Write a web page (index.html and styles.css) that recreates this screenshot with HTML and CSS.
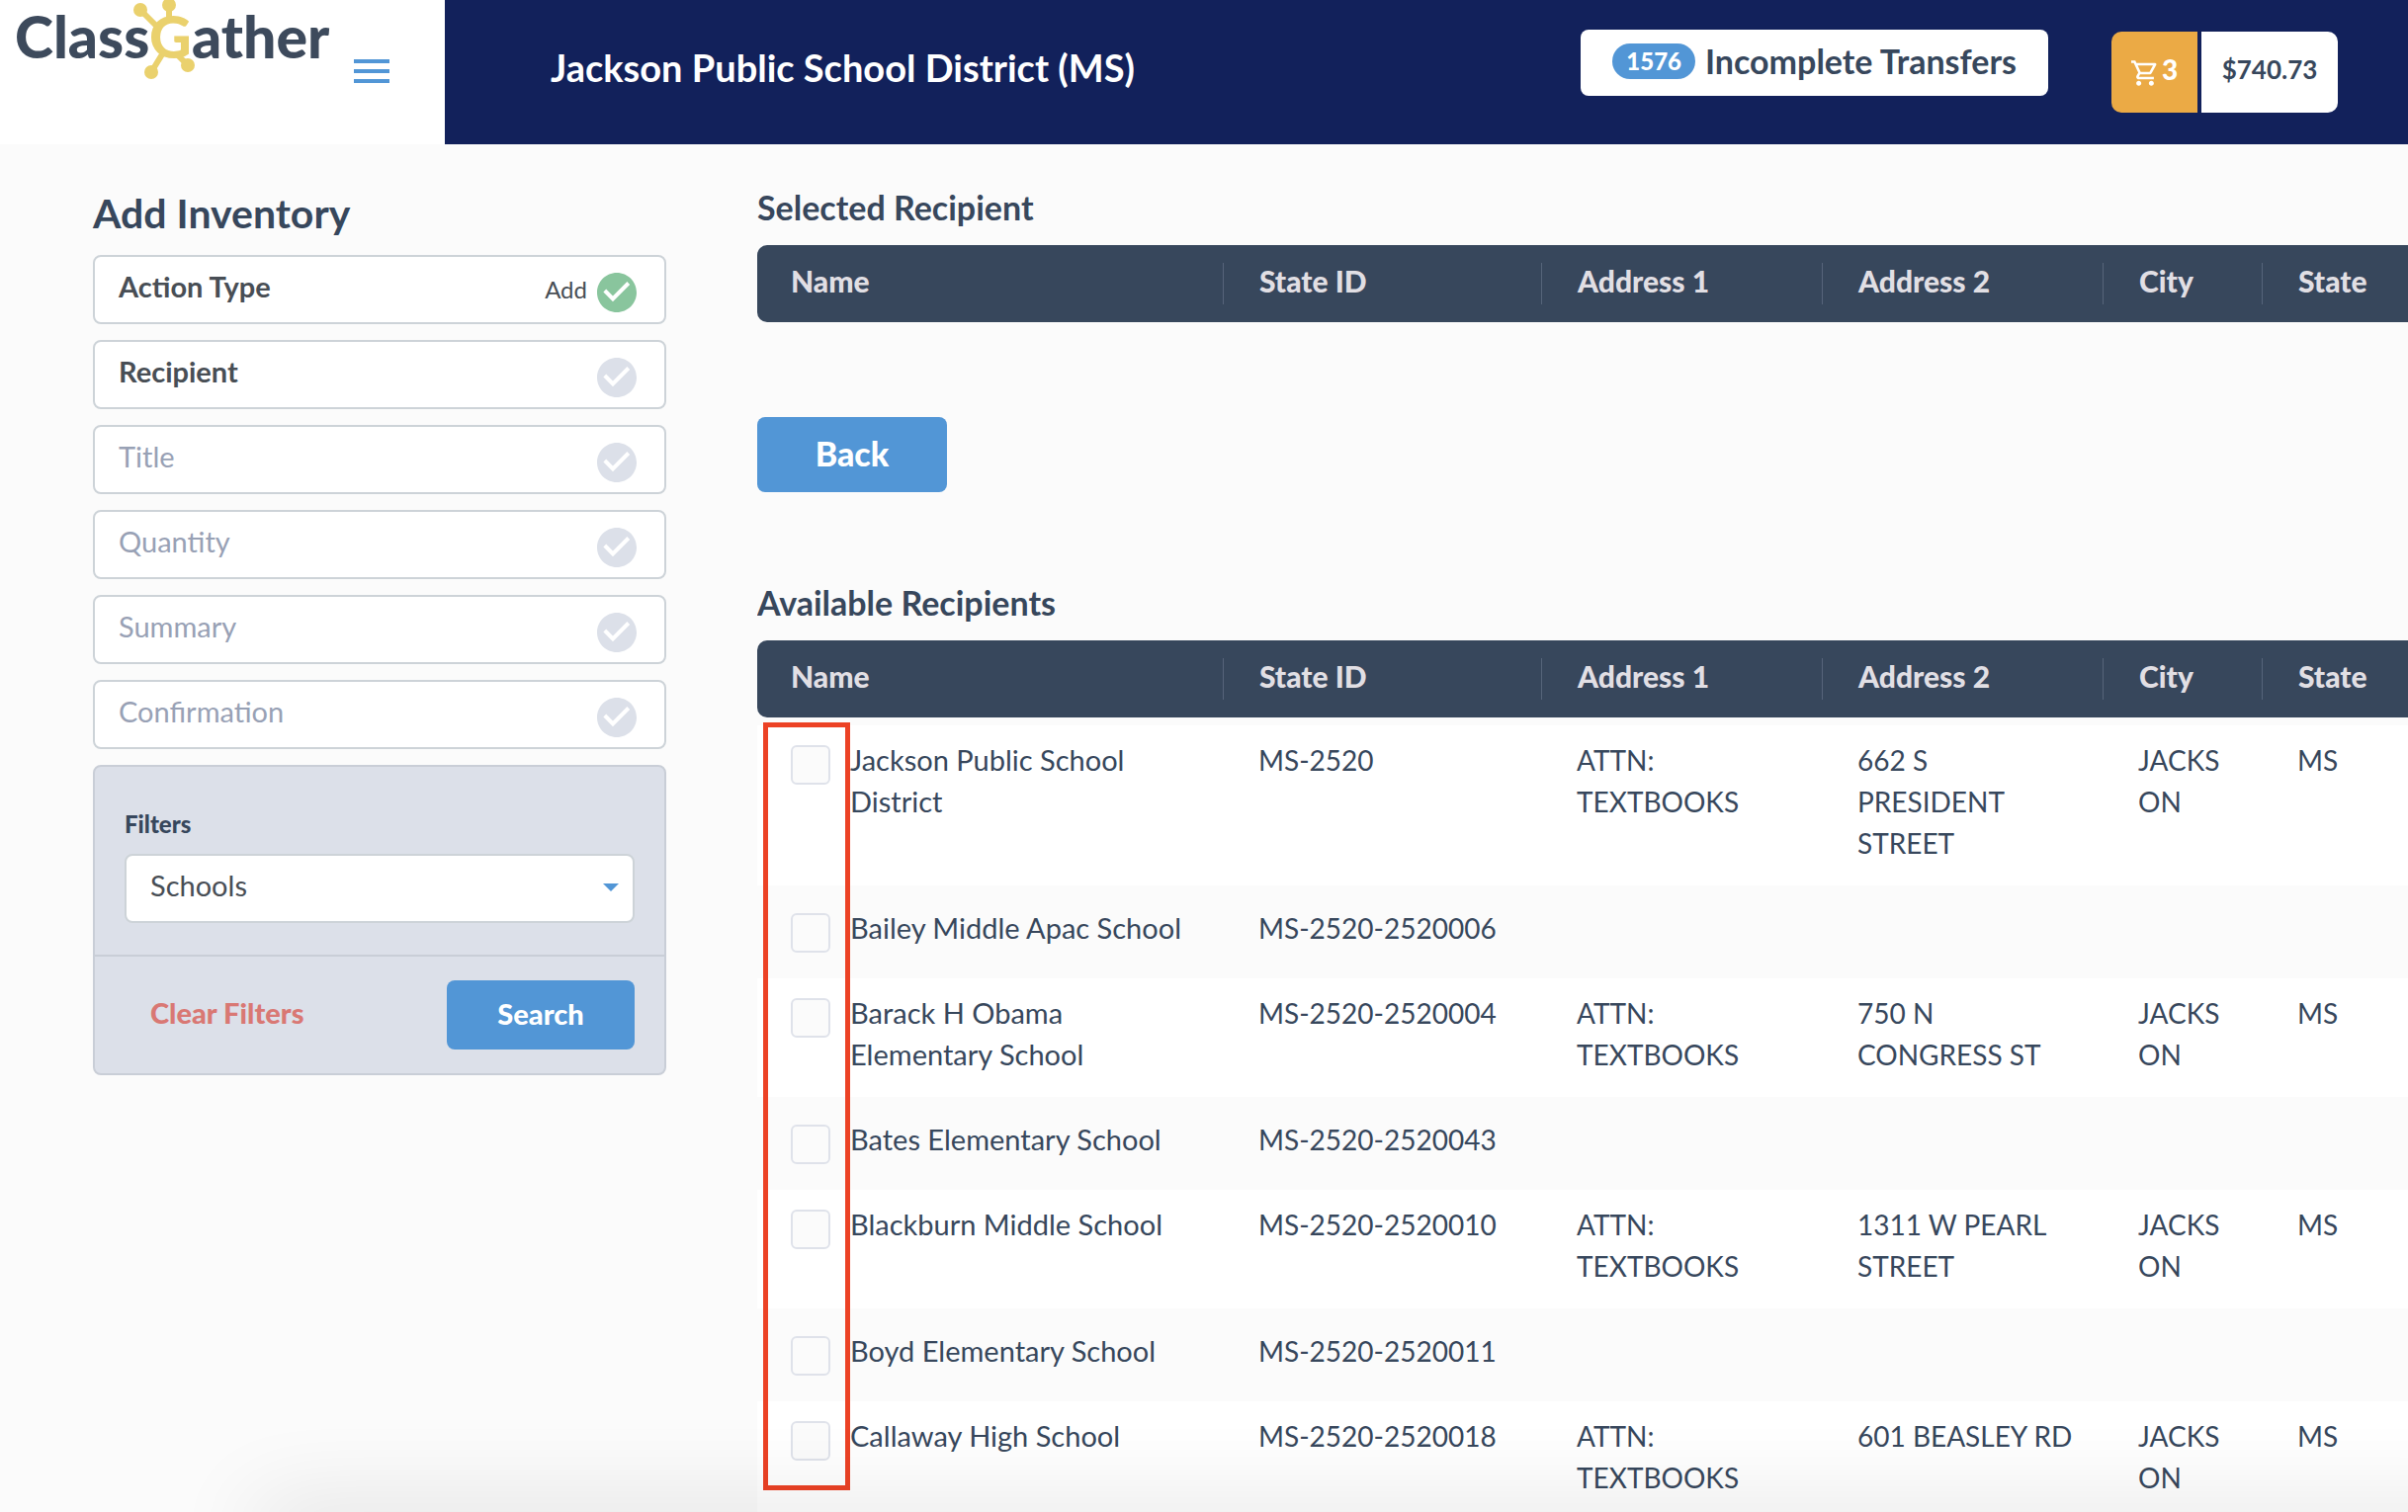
FILE: index.html
```html
<!DOCTYPE html>
<html lang="en">
  <head>
    <meta charset="utf-8">
    <title>ClassGather - Add Inventory</title>
    <link rel="stylesheet" href="styles.css">
  </head>
  <body>
    <!-- Shared check mark icon -->
    <svg class="defs" width="0" height="0" aria-hidden="true">
      <symbol id="check" viewBox="2 2 20 20">
        <path d="M12 2C6.48 2 2 6.48 2 12s4.48 10 10 10 10-4.48 10-10S17.52 2 12 2zm-2 14.6l-4.8-4.8 1.4-1.5L10 13.7l7.2-7.2L18.6 8 10 16.6z"/>
      </symbol>
    </svg>

    <header class="topbar">
      <div class="brand">
        <a href="#" class="logo" aria-label="ClassGather">
          <svg width="340" height="82" viewBox="0 0 340 82">
            <g class="logo-nodes">
              <path d="M142 10l18 18M171 5v16M153 73l11-18M190 66l-10-10"/>
              <circle cx="142" cy="10" r="7"/>
              <circle cx="171" cy="5" r="7"/>
              <circle cx="153" cy="73" r="7"/>
              <circle cx="190" cy="66" r="7"/>
            </g>
            <text class="logo-text" x="15" y="59">Class</text>
            <text class="logo-text logo-g" x="151" y="59">G</text>
            <text class="logo-text" x="194" y="59">ather</text>
          </svg>
        </a>
        <button type="button" class="menu-button" aria-label="Menu">
          <span></span>
          <span></span>
          <span></span>
        </button>
      </div>
      <h1 class="district">Jackson Public School District (MS)</h1>
      <button type="button" class="transfers"><span class="badge">1576</span>Incomplete Transfers</button>
      <div class="cart">
        <button type="button" class="cart-count">
          <svg width="28" height="28" viewBox="1 2 22 20" aria-hidden="true">
            <path d="M15.55 13c.75 0 1.41-.41 1.75-1.03l3.58-6.49A.996.996 0 0 0 20.01 4H5.21l-.94-2H1v2h2l3.6 7.59-1.35 2.44C4.52 15.37 5.48 17 7 17h12v-2H7l1.1-2h7.45zM6.16 6h12.15l-2.76 5H8.53L6.16 6zM7 18c-1.1 0-1.99.9-1.99 2S5.9 22 7 22s2-.9 2-2-.9-2-2-2zm10 0c-1.1 0-1.99.9-1.99 2s.89 2 1.99 2 2-.9 2-2-.9-2-2-2z"/>
          </svg>3
        </button>
        <span class="cart-total">$740.73</span>
      </div>
    </header>

    <div class="page">
      <aside class="sidebar">
        <h2>Add Inventory</h2>
        <ol class="steps">
          <li class="step done">Action Type <span class="step-value">Add</span><svg><use href="#check"/></svg></li>
          <li class="step current">Recipient <svg><use href="#check"/></svg></li>
          <li class="step">Title <svg><use href="#check"/></svg></li>
          <li class="step">Quantity <svg><use href="#check"/></svg></li>
          <li class="step">Summary <svg><use href="#check"/></svg></li>
          <li class="step">Confirmation <svg><use href="#check"/></svg></li>
        </ol>

        <form class="filters">
          <div class="filter-body">
            <label for="filter">Filters</label>
            <div class="select-wrap">
              <select id="filter" name="filter">
                <option>Schools</option>
              </select>
            </div>
          </div>
          <div class="filter-actions">
            <button type="reset" class="clear">Clear Filters</button>
            <button type="button" class="search">Search</button>
          </div>
        </form>
      </aside>

      <main class="content">
        <h3>Selected Recipient</h3>
        <table class="recipients">
          <colgroup>
            <col class="col-name"><col class="col-id"><col class="col-address"><col class="col-address"><col class="col-city"><col class="col-state">
          </colgroup>
          <thead>
            <tr><th>Name</th><th>State ID</th><th>Address 1</th><th>Address 2</th><th>City</th><th>State</th></tr>
          </thead>
        </table>

        <button type="button" class="back">Back</button>

        <h3>Available Recipients</h3>
        <div class="available">
          <table class="recipients">
            <colgroup>
              <col class="col-name"><col class="col-id"><col class="col-address"><col class="col-address"><col class="col-city"><col class="col-state">
            </colgroup>
            <thead>
              <tr><th>Name</th><th>State ID</th><th>Address 1</th><th>Address 2</th><th>City</th><th>State</th></tr>
            </thead>
            <tbody>
              <tr>
                <td><div class="pick"><input type="checkbox" id="r1"><label for="r1">Jackson Public School District</label></div></td>
                <td>MS-2520</td><td>ATTN: TEXTBOOKS</td><td>662 S PRESIDENT STREET</td><td>JACKSON</td><td>MS</td>
              </tr>
              <tr>
                <td><div class="pick"><input type="checkbox" id="r2"><label for="r2">Bailey Middle Apac School</label></div></td>
                <td>MS-2520-2520006</td><td></td><td></td><td></td><td></td>
              </tr>
              <tr>
                <td><div class="pick"><input type="checkbox" id="r3"><label for="r3">Barack H Obama Elementary School</label></div></td>
                <td>MS-2520-2520004</td><td>ATTN: TEXTBOOKS</td><td>750 N CONGRESS ST</td><td>JACKSON</td><td>MS</td>
              </tr>
              <tr>
                <td><div class="pick"><input type="checkbox" id="r4"><label for="r4">Bates Elementary School</label></div></td>
                <td>MS-2520-2520043</td><td></td><td></td><td></td><td></td>
              </tr>
              <tr>
                <td><div class="pick"><input type="checkbox" id="r5"><label for="r5">Blackburn Middle School</label></div></td>
                <td>MS-2520-2520010</td><td>ATTN: TEXTBOOKS</td><td>1311 W PEARL STREET</td><td>JACKSON</td><td>MS</td>
              </tr>
              <tr>
                <td><div class="pick"><input type="checkbox" id="r6"><label for="r6">Boyd Elementary School</label></div></td>
                <td>MS-2520-2520011</td><td></td><td></td><td></td><td></td>
              </tr>
              <tr>
                <td><div class="pick"><input type="checkbox" id="r7"><label for="r7">Callaway High School</label></div></td>
                <td>MS-2520-2520018</td><td>ATTN: TEXTBOOKS</td><td>601 BEASLEY RD</td><td>JACKSON</td><td>MS</td>
              </tr>
            </tbody>
          </table>
          <div class="highlight"></div>
        </div>
      </main>
    </div>

    <div class="bottom-shadow"></div>
  </body>
</html>
```

FILE: styles.css
```css
/* Global styles */
* {
  box-sizing: border-box;
}

body {
  background-color: #fbfbfb;
  color: #37475c;
  font-family: Lato, "Open Sans", sans-serif;
  font-size: 28px;
  height: 100vh;
  line-height: 42px;
  margin: 0;
  overflow: hidden;
}

button,
select {
  border: none;
  color: inherit;
  cursor: pointer;
  font: inherit;
}

h1,
h2,
h3 {
  margin: 0;
}

.defs {
  position: absolute;
}

/* Header styles */
.topbar {
  align-items: flex-start;
  background-color: #12215b;
  display: flex;
  height: 146px;
  padding-right: 71px;
}

.brand {
  align-items: flex-start;
  background-color: #ffffff;
  display: flex;
  flex: none;
  height: 146px;
  width: 450px;
}

.logo {
  height: 82px;
  width: 340px;
}

.logo-text {
  fill: #3d4a5c;
  font-size: 59px;
  font-weight: 900;
}

.logo-g {
  fill: #ead16d;
}

.logo-nodes {
  fill: #ead16d;
  stroke: #ead16d;
  stroke-width: 6;
}

.logo-nodes circle {
  stroke: none;
}

.menu-button {
  background: none;
  display: flex;
  flex-direction: column;
  gap: 6px;
  margin: 60px 0 0 18px;
  padding: 0;
  width: 36px;
}

.menu-button span {
  background-color: #5296d6;
  height: 4px;
  width: 36px;
}

.district {
  color: #ffffff;
  flex: 1;
  font-size: 38px;
  margin: 47px 0 0 107px;
}

.transfers {
  align-items: center;
  background-color: #ffffff;
  border-radius: 8px;
  display: flex;
  font-size: 34px;
  font-weight: 700;
  gap: 10px;
  height: 67px;
  margin: 30px 64px 0 0;
  padding: 0 32px 4px;
}

.badge {
  background-color: #5296d6;
  border-radius: 18px;
  color: #ffffff;
  font-size: 24px;
  font-weight: 900;
  line-height: 36px;
  padding: 0 14px;
}

.cart {
  display: flex;
  font-weight: 700;
  gap: 4px;
  margin-top: 32px;
}

.cart-count {
  align-items: center;
  background-color: #ebaa45;
  border-radius: 10px 0 0 10px;
  color: #ffffff;
  display: flex;
  font-weight: 900;
  gap: 3px;
  height: 82px;
  justify-content: center;
  padding: 0 0 6px;
  width: 87px;
}

.cart-count svg {
  fill: #ffffff;
  margin-top: 8px;
}

.cart-total {
  background-color: #ffffff;
  border-radius: 0 10px 10px 0;
  font-size: 26px;
  height: 82px;
  line-height: 76px;
  text-align: center;
  width: 138px;
}

/* Page layout */
.page {
  display: flex;
  gap: 92px;
  padding: 42px 0 0 94px;
}

/* Sidebar styles */
.sidebar {
  flex: none;
  width: 580px;
}

.sidebar h2 {
  font-size: 41px;
  line-height: 56px;
  margin-bottom: 14px;
}

.steps {
  display: flex;
  flex-direction: column;
  gap: 16px;
  list-style: none;
  margin: 0 0 16px;
  padding: 0;
}

.step {
  background-color: #ffffff;
  border: 2px solid #cdd3d8;
  border-radius: 8px;
  color: #98a1b5;
  display: flex;
  font-size: 29px;
  height: 70px;
  line-height: 60px;
  padding: 0 28px 0 24px;
}

.step svg {
  fill: #dce0e9;
  height: 40px;
  margin: 16px 0 0 auto;
  width: 40px;
}

.done,
.current {
  color: #484e55;
  font-weight: 700;
}

.step-value {
  font-size: 24px;
  font-weight: 400;
  line-height: 66px;
  margin-left: auto;
}

.done svg {
  fill: #89c59d;
  margin-left: 10px;
}

.filters {
  background-color: #dce0e9;
  border: 2px solid #c9ced7;
  border-radius: 8px;
}

.filter-body {
  border-bottom: 2px solid #c9ced7;
  padding: 40px 30px 32px;
}

.filter-body label {
  display: block;
  font-size: 24px;
  font-weight: 900;
  line-height: 36px;
  margin-bottom: 12px;
}

.select-wrap {
  position: relative;
}

.select-wrap::after {
  border: 8px solid transparent;
  border-bottom: none;
  border-top-color: #5296d6;
  content: "";
  position: absolute;
  right: 16px;
  top: 30px;
}

.filter-body select {
  appearance: none;
  background-color: #ffffff;
  border: 2px solid #cdd3d8;
  border-radius: 8px;
  color: #484e55;
  display: block;
  font-size: 29px;
  height: 70px;
  padding: 0 24px 6px;
  width: 100%;
}

.filter-actions {
  display: flex;
  font-size: 29px;
  justify-content: space-between;
  padding: 24px 30px;
}

.clear {
  background: none;
  color: #d97874;
  font-weight: 900;
  padding: 0 0 4px 26px;
}

.search {
  background-color: #5296d6;
  border-radius: 8px;
  color: #ffffff;
  font-weight: 900;
  height: 70px;
  padding-bottom: 4px;
  width: 190px;
}

/* Main content styles */
.content {
  flex: 1;
  min-width: 0;
  overflow: hidden;
}

.content h3 {
  font-size: 34px;
  line-height: 44px;
  margin-bottom: 16px;
}

.recipients {
  border-collapse: separate;
  border-spacing: 0;
  table-layout: fixed;
  width: 1800px;
}

.col-name {
  width: 472px;
}

.col-id {
  width: 322px;
}

.col-address {
  width: 284px;
}

.col-city {
  width: 161px;
}

th {
  background-color: #37475c;
  color: #e1dfe4;
  font-size: 30px;
  font-weight: 900;
  height: 78px;
  padding: 0 0 6px 36px;
  position: relative;
  text-align: left;
}

th:first-child {
  border-radius: 10px 0 0 10px;
  padding-left: 34px;
}

/* Short divider between the column titles */
th + th::before {
  background-color: #56647a;
  content: "";
  height: 42px;
  left: -1px;
  position: absolute;
  top: 18px;
  width: 1px;
}

td {
  background-color: #fbfbfb;
  overflow-wrap: anywhere;
  padding: 22px 28px 26px 35px;
  vertical-align: top;
}

td:first-child {
  font-size: 29px;
  padding-left: 34px;
  padding-right: 34px;
}

tbody tr:nth-child(odd) td {
  background-color: #ffffff;
  padding-bottom: 22px;
  padding-top: 14px;
}

.back {
  background-color: #5296d6;
  border-radius: 8px;
  color: #ffffff;
  display: block;
  font-size: 34px;
  font-weight: 900;
  height: 76px;
  margin: 96px 0 90px;
  padding-bottom: 4px;
  width: 192px;
}

.available {
  position: relative;
}

.available thead::after {
  content: "";
  display: block;
  height: 8px;
}

.pick {
  align-items: flex-start;
  display: flex;
  gap: 20px;
}

.pick input {
  appearance: none;
  background-color: #fbfbfb;
  border: 2px solid #dfe2ea;
  border-radius: 6px;
  flex: none;
  height: 40px;
  margin: 6px 0 0;
  width: 40px;
}

/* Red outline drawn over the checkbox column */
.highlight {
  border: 5px solid #ec4225;
  height: 777px;
  left: 6px;
  position: absolute;
  top: 83px;
  width: 88px;
}

.bottom-shadow {
  bottom: -40px;
  box-shadow: 0 0 90px rgba(0, 0, 0, 0.16);
  height: 40px;
  left: 260px;
  position: fixed;
  right: -100px;
}
```
